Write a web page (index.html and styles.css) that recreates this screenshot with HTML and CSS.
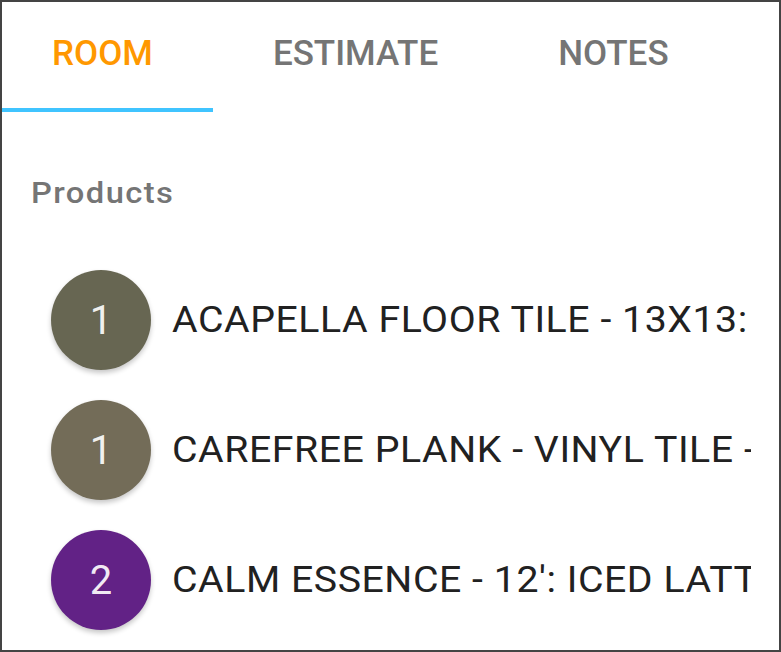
FILE: index.html
```html
<!DOCTYPE html>
<html>
<head>
<meta charset="utf-8">
<link rel="stylesheet" href="styles.css">
</head>
<body>
<div class="frame">
  <div class="tabs">
    <div class="tab tab-first active">ROOM</div>
    <div class="tab">ESTIMATE</div>
    <div class="tab">NOTES</div>
  </div>
  <div class="section-title"><span class="wide">Products</span></div>
  <div class="list">
    <div class="row">
      <div class="avatar olive">1</div>
      <div class="name"><span class="wide">ACAPELLA FLOOR TILE - 13X13: PEBBLE BEACH</span></div>
    </div>
    <div class="row">
      <div class="avatar taupe">1</div>
      <div class="name"><span class="wide">CAREFREE PLANK - VINYL TILE - 6X36</span></div>
    </div>
    <div class="row">
      <div class="avatar purple">2</div>
      <div class="name"><span class="wide">CALM ESSENCE - 12': ICED LATTE</span></div>
    </div>
  </div>
</div>
</body>
</html>
```

FILE: styles.css
```css
html, body {
  margin: 0;
  padding: 0;
  background: #ffffff;
}
.frame {
  width: 781px;
  height: 652px;
  box-sizing: border-box;
  border: 2px solid #444444;
  overflow: hidden;
  font-family: Roboto, "Liberation Sans", sans-serif;
  background: #ffffff;
}
.tabs {
  display: flex;
  height: 110px;
}
.tab {
  box-sizing: border-box;
  height: 110px;
  padding: 32px 60px 0 60px;
  font-size: 35px;
  font-weight: 500;
  line-height: 40px;
  color: #757575;
  border-bottom: 4px solid transparent;
  white-space: nowrap;
}
.tab-first {
  padding-left: 50px;
}
.tab.active {
  color: #ff9800;
  border-bottom-color: #40c4ff;
}
.wide {
  display: inline-block;
  white-space: nowrap;
  transform: scaleX(1.09);
  transform-origin: 0 50%;
}
.section-title {
  margin-top: 63px;
  padding-left: 29px;
  font-size: 30px;
  font-weight: 500;
  letter-spacing: 1.3px;
  line-height: 36px;
  color: #757575;
}
.list {
  margin-top: 44px;
  display: flex;
  flex-direction: column;
}
.row {
  height: 130px;
  display: flex;
  align-items: center;
  padding-left: 49px;
  padding-right: 28px;
}
.avatar {
  flex: 0 0 100px;
  width: 100px;
  height: 100px;
  border-radius: 50%;
  display: flex;
  align-items: center;
  justify-content: center;
  font-size: 40px;
  color: rgba(255, 255, 255, 0.92);
  box-shadow: 0 3px 5px rgba(0, 0, 0, 0.22);
}
.olive { background: #676652; }
.taupe { background: #736c58; }
.purple { background: #622286; }
.name {
  margin-left: 21px;
  flex: 1 1 auto;
  min-width: 0;
  overflow: hidden;
  white-space: nowrap;
  font-size: 36px;
  letter-spacing: 0.5px;
  line-height: 44px;
  color: #212121;
}
```
